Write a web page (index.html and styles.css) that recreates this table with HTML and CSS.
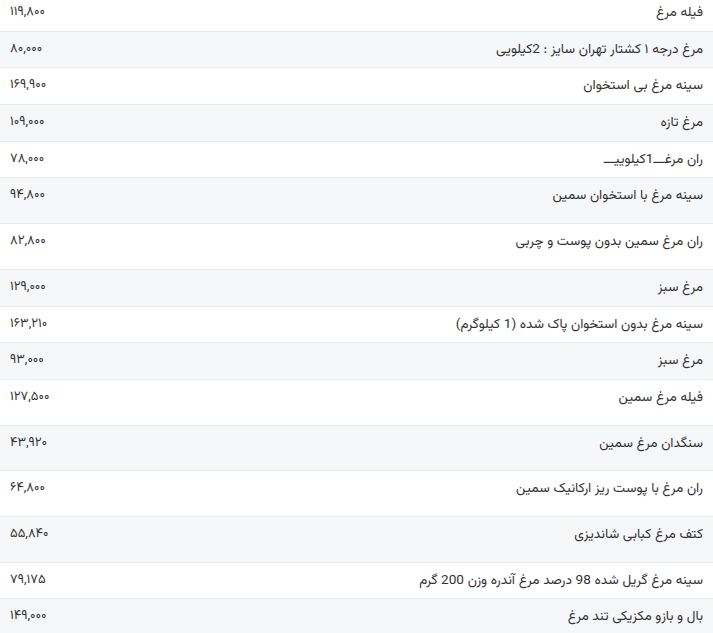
FILE: index.html
```html
<!DOCTYPE html>
<html lang="fa" dir="rtl">
<head>
<meta charset="utf-8">
<link rel="stylesheet" href="styles.css">
</head>
<body>
<table class="prices">
<tbody>
<tr><td class="name">فیله مرغ</td><td class="price">۱۱۹,۸۰۰</td></tr>
<tr><td class="name">مرغ درجه ۱ کشتار تهران سایز : 2کیلویی</td><td class="price">۸۰,۰۰۰</td></tr>
<tr><td class="name">سینه مرغ بی استخوان</td><td class="price">۱۶۹,۹۰۰</td></tr>
<tr><td class="name">مرغ تازه</td><td class="price">۱۰۹,۰۰۰</td></tr>
<tr><td class="name">ران مرغـــ1کیلوییـــ</td><td class="price">۷۸,۰۰۰</td></tr>
<tr class="tall"><td class="name">سینه مرغ با استخوان سمین</td><td class="price">۹۴,۸۰۰</td></tr>
<tr class="tall"><td class="name">ران مرغ سمین بدون پوست و چربی</td><td class="price">۸۲,۸۰۰</td></tr>
<tr><td class="name">مرغ سبز</td><td class="price">۱۲۹,۰۰۰</td></tr>
<tr><td class="name">سینه مرغ بدون استخوان پاک شده (1 کیلوگرم)</td><td class="price">۱۶۳,۲۱۰</td></tr>
<tr><td class="name">مرغ سبز</td><td class="price">۹۳,۰۰۰</td></tr>
<tr class="tall"><td class="name">فیله مرغ سمین</td><td class="price">۱۲۷,۵۰۰</td></tr>
<tr class="tall"><td class="name">سنگدان مرغ سمین</td><td class="price">۴۳,۹۲۰</td></tr>
<tr class="tall"><td class="name">ران مرغ با پوست ریز ارکانیک سمین</td><td class="price">۶۴,۸۰۰</td></tr>
<tr class="tall"><td class="name">کتف مرغ کبابی شاندیزی</td><td class="price">۵۵,۸۴۰</td></tr>
<tr><td class="name">سینه مرغ گریل شده 98 درصد مرغ آندره وزن 200 گرم</td><td class="price">۷۹,۱۷۵</td></tr>
<tr><td class="name">بال و بازو مکزیکی تند مرغ</td><td class="price">۱۴۹,۰۰۰</td></tr>
</tbody>
</table>
</body>
</html>
```
FILE: styles.css
```css
html, body {
  margin: 0;
  padding: 0;
  background: #ffffff;
}
body {
  font-family: "Vazirmatn", "Vazir", "Noto Sans Arabic", "DejaVu Sans", sans-serif;
  color: #333333;
  font-size: 13.6px;
  overflow: hidden;
}
.prices {
  width: 100%;
  border-collapse: collapse;
  margin-top: -6px;
}
.prices td {
  border-top: 1px solid #e8eaed;
  padding: 8px 10px;
  line-height: 19.68px;
  vertical-align: top;
}
.prices tr:nth-child(even) td {
  background: #f6f7f9;
}
.prices tr.tall td {
  padding-bottom: 17px;
}
.name {
  text-align: right;
  padding-top: 8.5px;
}
.price {
  text-align: left;
  font-size: 13px;
  padding-left: 8px;
  white-space: nowrap;
}
```
